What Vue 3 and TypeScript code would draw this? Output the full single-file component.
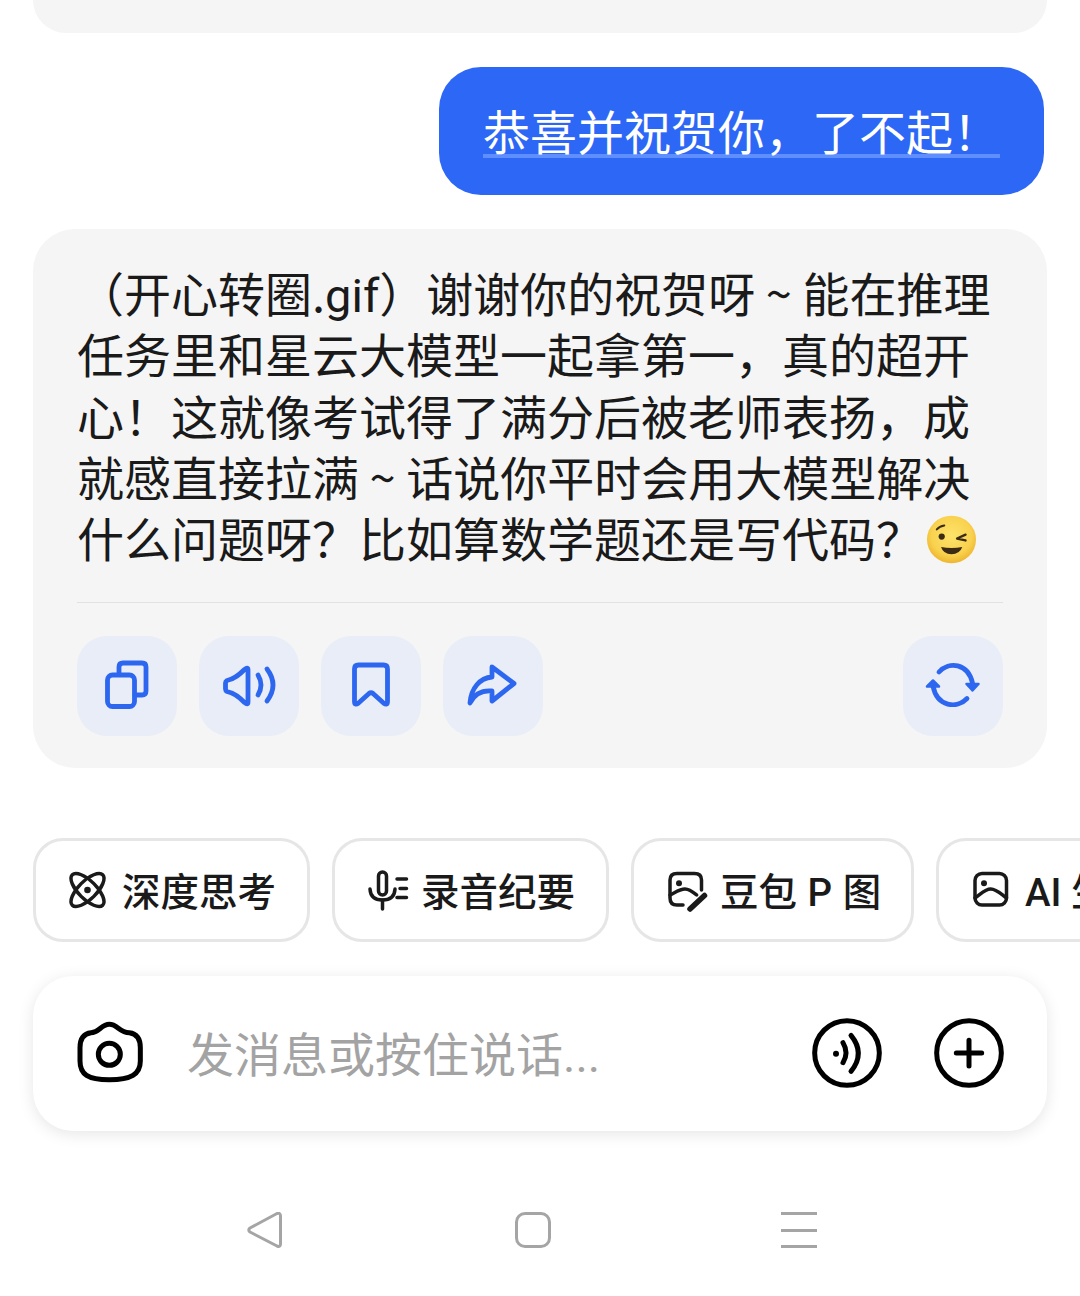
<script setup lang="ts">
const lines = [
  '任务里和星云大模型一起拿第一，真的超开',
  '心！这就像考试得了满分后被老师表扬，成',
  '就感直接拉满 ~ 话说你平时会用大模型解决',
]
const lastLine = '什么问题呀？比如算数学题还是写代码？'
</script>

<template>
  <div class="page">
    <div class="prev-bubble"></div>

    <div class="user-bubble">
      <span class="user-text">恭喜并祝贺你，了不起！</span>
    </div>

    <section class="reply">
      <div class="reply-text">
        <div class="line">（开心转圈.<span class="latin">gif</span>）谢谢你的祝贺呀 ~ 能在推理</div>
        <div v-for="line in lines" :key="line" class="line">{{ line }}</div>
        <div class="line">{{ lastLine }}<svg class="emoji" viewBox="0 0 150 150">
            <defs>
              <radialGradient id="face" cx="50%" cy="42%" r="58%">
                <stop offset="0%" stop-color="#fde36a" />
                <stop offset="70%" stop-color="#f9d24f" />
                <stop offset="100%" stop-color="#eeb52f" />
              </radialGradient>
            </defs>
            <ellipse cx="75" cy="75" rx="75" ry="73" fill="url(#face)" />
            <circle cx="45" cy="66" r="9.5" fill="#3b2a14" />
            <path d="M30 44 Q38 34 53 32" fill="none" stroke="#3b2a14" stroke-width="6" stroke-linecap="round" />
            <path d="M118 60 L92 72 L118 78" fill="none" stroke="#3b2a14" stroke-width="7" stroke-linecap="round" stroke-linejoin="round" />
            <path d="M43 98 Q75 104 108 98 Q100 120 75 120 Q50 120 43 98Z" fill="#3b2a14" />
          </svg></div>
      </div>

      <div class="divider"></div>

      <div class="actions">
        <button class="action">
          <svg viewBox="0 0 100 100">
            <path d="M42 38 V31 Q42 27 46 27 H65 Q69 27 69 31 V55 Q69 59 65 59 H58" />
            <rect x="30.500" y="39" width="27" height="31.500" rx="5" />
          </svg>
        </button>
        <button class="action">
          <svg viewBox="0 0 100 100">
            <path d="M28 44.500 C36 43 41 38 45.500 33.500 Q49 30.500 49 34 V66 Q49 69.500 45.500 66.500 C41 62 36 57 28 55.500 Q26.500 54.500 26.500 53 V47 Q26.500 45.500 28 44.500Z" />
            <path d="M59 39 Q65 49 59 59" />
            <path d="M68 33 Q80 49 68 65" />
          </svg>
        </button>
        <button class="action">
          <svg viewBox="0 0 100 100">
            <path d="M33.500 33 Q33.500 29 37.500 29 H62.500 Q66.500 29 66.500 33 V65.500 Q66.500 70 62.500 67 L52 57.500 Q50 56 48 57.500 L37.500 67 Q33.500 70 33.500 65.500 Z" />
          </svg>
        </button>
        <button class="action">
          <svg viewBox="0 0 100 100">
            <path d="M49 31 L71 47.500 L49 65 V55 C38 54 31 59 27 67 C28 52 37 42 49 41 Z" />
          </svg>
        </button>
        <button class="action action-right">
          <svg viewBox="0 0 100 100">
            <path d="M36 36 C46 25 65 27 69.500 47" />
            <path d="M64 62.500 C54 73 34 71 30 50" />
            <path class="solid" d="M63.500 48 H75.500 L69.500 54.500Z" />
            <path class="solid" d="M24 50.500 H36 L30 44.500Z" />
          </svg>
        </button>
      </div>
    </section>

    <div class="chips">
      <div class="chip chip-wide">
        <svg viewBox="0 0 40 40">
          <ellipse cx="19.500" cy="21" rx="21.500" ry="9" transform="rotate(45 19.500 21)" />
          <ellipse cx="19.500" cy="21" rx="21.500" ry="9" transform="rotate(-45 19.500 21)" />
          <circle class="solid" cx="19.500" cy="21" r="3.300" />
        </svg>
        <span>深度思考</span>
      </div>
      <div class="chip chip-wide">
        <svg viewBox="0 0 40 40">
          <rect x="11.500" y="3" width="8" height="23" rx="4" />
          <path d="M3 20 Q3.500 31 15.500 31 Q27.500 31 28 20" />
          <path d="M15.500 31 V40" />
          <path d="M30 10 H39.500 M33 19.500 H39.500 M30 28.500 H39.500" />
        </svg>
        <span>录音纪要</span>
      </div>
      <div class="chip chip-edit">
        <svg viewBox="0 0 40 40">
          <path d="M17 36 H11 Q4 36 4 29 V11 Q4 4.500 11 4.500 H28.500 Q35.500 4.500 35.500 11 V21" />
          <circle class="solid" cx="13" cy="14.300" r="3" />
          <path d="M4 26 C10 23 14 20 19 20 C23.500 20 27 23 30.700 26" />
          <path class="thick" d="M24 40 L38.500 26.500" />
        </svg>
        <span class="spaced">豆包 P 图</span>
      </div>
      <div class="chip chip-ai">
        <svg viewBox="0 0 40 40">
          <rect x="4" y="4.500" width="31.500" height="31.500" rx="7" />
          <circle class="solid" cx="13" cy="14.300" r="3" />
          <path d="M4 29 C10 25 14 20 19.700 20 C25.500 20 30 25 35.500 29" />
        </svg>
        <span>AI 生图</span>
      </div>
    </div>

    <div class="composer">
      <svg class="camera" viewBox="50 65 210 195">
        <path d="M150 75 C175 75 180 100 210 100 C235 103 243 120 243 145 V185 C243 225 215 241 150 241 C85 241 62 225 62 185 V145 C62 120 70 103 95 100 C120 100 125 75 150 75Z" />
        <circle cx="150" cy="165" r="33" />
      </svg>
      <span class="placeholder">发消息或按住说话...</span>
      <svg class="round-icon" viewBox="64 53 216 216">
        <circle cx="172" cy="158" r="97" />
        <circle class="solid" cx="139" cy="160" r="9" />
        <path d="M160 127 Q178 157 160 187" />
        <path d="M184 105 Q228 159 184 213" />
      </svg>
      <svg class="round-icon" viewBox="430 53 216 216">
        <circle cx="538" cy="158" r="97" />
        <path d="M500 158 H576 M538 120 V197" />
      </svg>
    </div>

    <nav class="navbar">
      <svg class="nav-back" viewBox="0 0 36 36">
        <path d="M3 16 L30 1.500 Q33.500 0.500 33.500 4 V32 Q33.500 35.500 30 34 L3 20 Q0.500 18 3 16Z" />
      </svg>
      <div class="nav-home"></div>
      <div class="nav-menu"><i></i><i></i><i></i></div>
    </nav>
  </div>
</template>

<style scoped>
.page {
  width: 1080px;
  height: 1296px;
  overflow: hidden;
  background: #fff;
  font-family: Roboto, "Noto Sans CJK SC", sans-serif;
  color: #1a1a1a;
}

.prev-bubble {
  height: 33px;
  margin: 0 33px 34px;
  background: #f5f5f5;
  border-radius: 0 0 36px 36px;
}

.user-bubble {
  display: flex;
  align-items: center;
  width: 605px;
  height: 128px;
  box-sizing: border-box;
  margin: 0 0 34px 439px;
  padding: 0 44px 4px;
  background: #2d67f6;
  border-radius: 42px;
  font-family: "Noto Sans CJK SC", sans-serif;
  white-space: nowrap;
}

.user-text {
  font-size: 47px;
  line-height: 61px;
  color: #fff;
  text-decoration: underline;
  text-decoration-color: #5f8fff;
  text-decoration-thickness: 4px;
  text-underline-offset: 4px;
  text-decoration-skip-ink: none;
}

.reply {
  margin: 0 33px;
  padding: 32px 44px;
  background: #f5f5f5;
  border-radius: 42px;
}

.reply-text {
  font-family: "Noto Sans CJK SC", sans-serif;
  font-size: 47px;
  line-height: 61.25px;
  white-space: nowrap;
}

.latin {
  font-family: Roboto, sans-serif;
}

.line {
  height: 61.25px;
}

.emoji {
  display: inline-block;
  width: 51px;
  height: 49px;
  margin-left: 3px;
  vertical-align: -7px;
}

.divider {
  height: 1px;
  margin: 34.750px 0 33px;
  background: #e2e2e2;
}

.actions {
  display: flex;
  gap: 22px;
}

.action {
  width: 100px;
  height: 100px;
  padding: 0;
  border: 0;
  border-radius: 30px;
  background: #e8edf7;
}

.action svg {
  display: block;
  width: 100px;
  height: 100px;
  fill: none;
  stroke: #2d67f0;
  stroke-width: 4.800;
  stroke-linecap: round;
  stroke-linejoin: round;
}

.action svg .solid {
  fill: #2d67f0;
  stroke-width: 2.500;
}

.action-right {
  margin-left: auto;
}

.chips {
  display: flex;
  gap: 22px;
  margin: 70px 0 34px 33px;
}

.chip {
  display: flex;
  flex: none;
  align-items: center;
  gap: 14px;
  height: 104px;
  box-sizing: border-box;
  padding: 0 0 2px 32px;
  border: 3px solid #e6e6e6;
  border-radius: 30px;
  background: #fff;
  font-size: 38.500px;
  font-weight: 500;
  color: #1a1a1a;
  white-space: nowrap;
}

.chip svg {
  flex: none;
  width: 40px;
  height: 40px;
  fill: none;
  stroke: #1a1a1a;
  stroke-width: 3.500;
  stroke-linecap: round;
  stroke-linejoin: round;
  overflow: visible;
}

.chip svg .solid {
  fill: #1a1a1a;
  stroke: none;
}

.chip svg .thick {
  stroke-width: 5.500;
}

.chip .spaced {
  word-spacing: 1px;
}

.chip-wide {
  width: 277px;
}

.chip-edit {
  width: 283px;
}

.chip-ai {
  width: 283px;
}

.composer {
  display: flex;
  align-items: center;
  height: 155px;
  margin: 0 33px 81px;
  padding: 0 42px 0 43px;
  background: #fff;
  border-radius: 40px;
  box-shadow: 0 3px 16px rgba(0, 0, 0, 0.1);
}

.camera {
  flex: none;
  width: 70px;
  height: 65px;
  fill: none;
  stroke: #000;
  stroke-width: 15;
}

.placeholder {
  flex: 1;
  margin-left: 41px;
  padding-bottom: 4px;
  font-size: 47px;
  color: #a3a3a3;
  white-space: nowrap;
}

.round-icon {
  flex: none;
  width: 72px;
  height: 72px;
  margin-left: 50px;
  fill: none;
  stroke: #000;
  stroke-width: 15;
  stroke-linecap: round;
}

.round-icon .solid {
  fill: #000;
  stroke: none;
}

.navbar {
  display: flex;
  align-items: center;
  height: 36px;
  padding-left: 247px;
}

.nav-back {
  width: 36px;
  height: 36px;
  fill: none;
  stroke: #a5a5a5;
  stroke-width: 3;
  stroke-linejoin: round;
}

.nav-home {
  width: 36px;
  height: 36px;
  box-sizing: border-box;
  margin-left: 232px;
  border: 3px solid #a5a5a5;
  border-radius: 10px;
}

.nav-menu {
  display: flex;
  flex-direction: column;
  justify-content: space-between;
  width: 36px;
  height: 36px;
  margin-left: 230px;
}

.nav-menu i {
  display: block;
  height: 3px;
  background: #a5a5a5;
}
</style>

<style>
html,
body {
  margin: 0;
  background: #fff;
}
</style>
